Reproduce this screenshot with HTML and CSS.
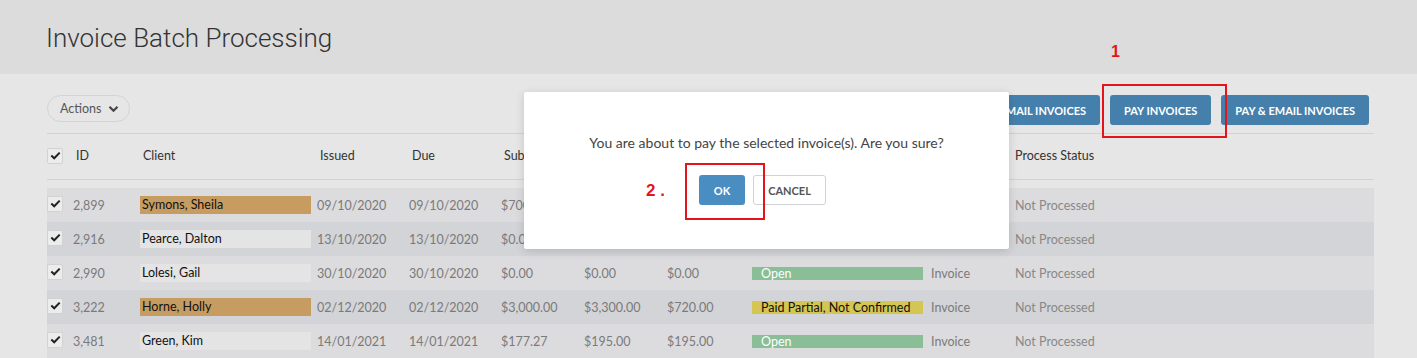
FILE: index.html
```html
<!DOCTYPE html>
<html lang="en">
<head>
    <meta charset="UTF-8">
    <meta name="viewport" content="width=device-width, initial-scale=1.0">
    <title>Invoice Batch Processing</title>
    <link rel="stylesheet" href="styles.css">
</head>
<body>
    <header class="page-header">
        <h1>Invoice Batch Processing</h1>
    </header>

    <main class="content">
        <div class="toolbar">
            <button class="pill">Actions
                <svg class="chev" width="11" height="8" viewBox="0 0 11 8"><path d="M1.5 1.8 L5.5 5.8 L9.5 1.8" fill="none" stroke="#444" stroke-width="2.2"/></svg>
            </button>
            <div class="btn-group">
                <button class="btn">EMAIL INVOICES</button>
                <button class="btn">PAY INVOICES</button>
                <button class="btn">PAY &amp; EMAIL INVOICES</button>
            </div>
        </div>

        <!-- column headings (the ones under the dialog are left empty) -->
        <div class="grid grid-head">
            <span class="check"><svg width="11" height="9" viewBox="0 0 11 9"><path d="M1.3 4.6 L4.2 7.3 L9.7 1.6" fill="none" stroke="#222" stroke-width="2"/></svg></span>
            <span>ID</span>
            <span>Client</span>
            <span>Issued</span>
            <span>Due</span>
            <span>Subtotal</span>
            <span></span>
            <span></span>
            <span></span>
            <span></span>
            <span class="last">Process Status</span>
        </div>

        <div class="rows">
            <div class="grid row">
                <span class="check"><svg width="11" height="9" viewBox="0 0 11 9"><path d="M1.3 4.6 L4.2 7.3 L9.7 1.6" fill="none" stroke="#222" stroke-width="2"/></svg></span>
                <span>2,899</span>
                <span class="client flag">Symons, Sheila</span>
                <span>09/10/2020</span>
                <span>09/10/2020</span>
                <span>$700.00</span>
                <span></span>
                <span></span>
                <span></span>
                <span></span>
                <span class="proc">Not Processed</span>
            </div>
            <div class="grid row">
                <span class="check"><svg width="11" height="9" viewBox="0 0 11 9"><path d="M1.3 4.6 L4.2 7.3 L9.7 1.6" fill="none" stroke="#222" stroke-width="2"/></svg></span>
                <span>2,916</span>
                <span class="client">Pearce, Dalton</span>
                <span>13/10/2020</span>
                <span>13/10/2020</span>
                <span>$0.00</span>
                <span></span>
                <span></span>
                <span></span>
                <span></span>
                <span class="proc">Not Processed</span>
            </div>
            <div class="grid row">
                <span class="check"><svg width="11" height="9" viewBox="0 0 11 9"><path d="M1.3 4.6 L4.2 7.3 L9.7 1.6" fill="none" stroke="#222" stroke-width="2"/></svg></span>
                <span>2,990</span>
                <span class="client">Lolesi, Gail</span>
                <span>30/10/2020</span>
                <span>30/10/2020</span>
                <span>$0.00</span>
                <span>$0.00</span>
                <span>$0.00</span>
                <span class="badge open">Open</span>
                <span>Invoice</span>
                <span class="proc">Not Processed</span>
            </div>
            <div class="grid row">
                <span class="check"><svg width="11" height="9" viewBox="0 0 11 9"><path d="M1.3 4.6 L4.2 7.3 L9.7 1.6" fill="none" stroke="#222" stroke-width="2"/></svg></span>
                <span>3,222</span>
                <span class="client flag">Horne, Holly</span>
                <span>02/12/2020</span>
                <span>02/12/2020</span>
                <span>$3,000.00</span>
                <span>$3,300.00</span>
                <span>$720.00</span>
                <span class="badge partial">Paid Partial, Not Confirmed</span>
                <span>Invoice</span>
                <span class="proc">Not Processed</span>
            </div>
            <div class="grid row">
                <span class="check"><svg width="11" height="9" viewBox="0 0 11 9"><path d="M1.3 4.6 L4.2 7.3 L9.7 1.6" fill="none" stroke="#222" stroke-width="2"/></svg></span>
                <span>3,481</span>
                <span class="client">Green, Kim</span>
                <span>14/01/2021</span>
                <span>14/01/2021</span>
                <span>$177.27</span>
                <span>$195.00</span>
                <span>$195.00</span>
                <span class="badge open">Open</span>
                <span>Invoice</span>
                <span class="proc">Not Processed</span>
            </div>
        </div>
    </main>

    <!-- confirm dialog -->
    <div class="modal">
        <p>You are about to pay the selected invoice(s). Are you sure?</p>
        <div class="modal-actions">
            <button class="btn btn-ok">OK</button>
            <button class="btn-cancel">CANCEL</button>
        </div>
    </div>

    <!-- annotations -->
    <span class="note note-1">1</span>
    <span class="mark mark-pay"></span>
    <span class="note note-2">2 .</span>
    <span class="mark mark-ok"></span>
</body>
</html>
```

FILE: styles.css
```css
body {
    margin: 0;
    font-family: Lato, "Open Sans", sans-serif;
    background-color: #e6e6e6;
    color: #333;
}
.page-header {
    height: 74px;
    background: #dcdcdc;
    padding-left: 46px;
    box-sizing: border-box;
}
.page-header h1 {
    margin: 0;
    padding-top: 23px;
    font-family: Roboto, "Liberation Sans", sans-serif;
    font-weight: 300;
    font-size: 26px;
    color: #333;
}
.content {
    padding: 0 43px 0 47px;
}
.toolbar {
    display: flex;
    justify-content: space-between;
    align-items: flex-start;
    padding: 21px 5px 8px 0;
    border-bottom: 1px solid #d2d2d2;
}
.pill {
    display: flex;
    align-items: center;
    gap: 7px;
    height: 27px;
    width: 83px;
    padding: 0 0 0 12px;
    border: 1px solid #d3d3d3;
    border-radius: 14px;
    background: #e6e6e6;
    font-family: inherit;
    font-size: 12.5px;
    color: #555;
}
.btn-group {
    display: flex;
    gap: 10px;
}
.btn {
    height: 30px;
    padding: 0 14px;
    border: none;
    border-radius: 3px;
    background: #4580ad;
    color: white;
    font-family: inherit;
    font-size: 11px;
    font-weight: bold;
}
.grid {
    display: grid;
    grid-template-columns: 26px 67px 177px 92px 92px 83px 83px 85px 179px 84px 1fr;
    align-items: center;
    font-size: 12.5px;
}
.grid-head {
    height: 45px;
    border-bottom: 1px solid #d2d2d2;
    color: #333;
}
.grid-head span {
    padding-left: 3px;
    margin-top: -2px;
}
.grid-head .check,
.grid-head .last {
    padding-left: 0;
}
.check {
    width: 14px;
    height: 14px;
    border: 1px solid #d2d2d2;
    border-radius: 2px;
    background: #ececec;
    display: flex;
    align-items: center;
    justify-content: center;
}
.rows {
    margin-top: 8px;
}
.row {
    height: 34px;
    background: #dcdcdf;
    color: #7a7a7a;
}
.row:nth-child(even) {
    background: #d3d4d7;
}
.row .check {
    margin-top: -3px;
}
.client {
    height: 18px;
    line-height: 18px;
    width: 171px;
    box-sizing: border-box;
    padding-left: 2px;
    background: #e4e4e5;
    color: #111;
}
.client.flag {
    background: #c79c61;
}
.badge {
    height: 13px;
    line-height: 13px;
    width: 171px;
    box-sizing: border-box;
    padding-left: 9px;
}
.badge.open {
    background: #8abe97;
    color: #fff;
}
.badge.partial {
    background: #d5c553;
    color: #111;
}
.proc {
    color: #888;
}
.modal {
    position: absolute;
    left: 524px;
    top: 92px;
    width: 485px;
    height: 157px;
    background: white;
    border-radius: 2px;
    box-shadow: 0 2px 10px rgba(0,0,0,0.15);
    text-align: center;
}
.modal p {
    margin: 42px 0 0;
    font-size: 14px;
    color: #444;
}
.modal-actions {
    display: flex;
    justify-content: center;
    gap: 8px;
    margin-top: 24px;
    padding-right: 8px;
}
.btn-ok {
    width: 46px;
    padding: 0;
    background: #4a8dc1;
}
.btn-cancel {
    height: 30px;
    width: 73px;
    border: 1px solid #cfd3d7;
    border-radius: 3px;
    background: white;
    color: #555;
    font-family: inherit;
    font-size: 11px;
    font-weight: bold;
}
.note {
    position: absolute;
    font-family: "Liberation Sans", Arial, sans-serif;
    font-weight: bold;
    color: #e3151a;
}
.note-1 {
    left: 1111px;
    top: 43px;
    font-size: 16px;
}
.note-2 {
    left: 646px;
    top: 181px;
    font-size: 17px;
}
.mark {
    position: absolute;
    border: 2px solid #e3151a;
    box-sizing: border-box;
}
.mark-pay {
    left: 1102px;
    top: 84px;
    width: 125px;
    height: 54px;
}
.mark-ok {
    left: 685px;
    top: 163px;
    width: 80px;
    height: 57px;
}
```
